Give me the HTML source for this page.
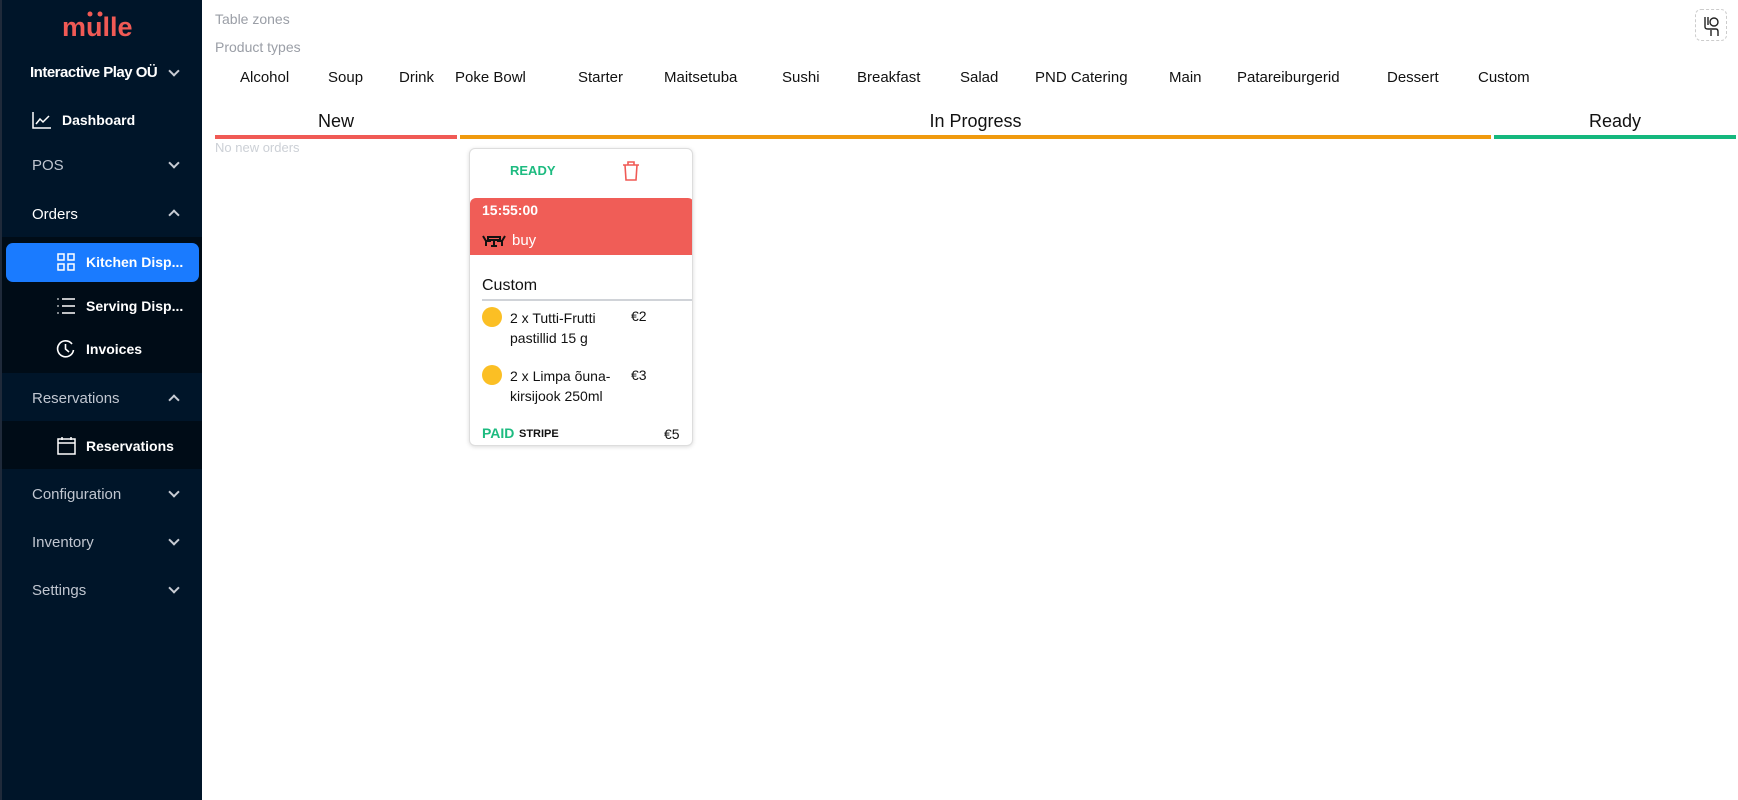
<!DOCTYPE html>
<html><head><meta charset="utf-8"><style>
*{margin:0;padding:0;box-sizing:border-box}
body{width:1738px;height:800px;overflow:hidden;background:#fff;font-family:"Liberation Sans",sans-serif;position:relative}
.sb{position:absolute;left:0;top:0;width:202px;height:800px;background:#001529;border-left:2px solid #1f2a3a;overflow:hidden}
.a{position:absolute;white-space:nowrap}
.sub{position:absolute;left:0;width:200px;background:#000c17}
.mi{position:absolute;left:30px;font-size:15px;color:#c0c6d0}
.mw{color:#fff;font-weight:bold}
.chev{position:absolute;left:168px;width:8px;height:8px;border-right:2px solid #c8ccd4;border-bottom:2px solid #c8ccd4}
.dn{transform:rotate(45deg)}
.up{transform:rotate(-135deg)}
.tab{position:absolute;top:69px;font-size:15px;color:#111}
.ico{position:absolute}
</style></head><body>
<div class="sb">
  <div class="sub" style="top:237px;height:136px"></div>
  <div class="sub" style="top:421px;height:48px"></div>
  <div class="a" style="left:60px;top:12px;font-size:27px;font-weight:bold;color:#f05a55;letter-spacing:0px">m<span style="position:relative">u<svg style="position:absolute;left:1px;top:-2px" width="16" height="10"><circle cx="3" cy="4" r="2.5" fill="#f05a55"/><circle cx="13" cy="4" r="2.5" fill="#f05a55"/></svg></span>lle</div>
  <div class="a mw" style="left:28px;top:64px;font-size:15px;letter-spacing:-0.5px">Interactive Play OÜ</div>
  <div class="chev dn" style="top:67px"></div>
  <svg class="ico" style="left:30px;top:111px" width="20" height="18" fill="none" stroke="#fff" stroke-width="1.5"><path d="M1 1V17H19"/><path d="M4 13L8 8L11 11L17 5"/></svg>
  <div class="a mw" style="left:60px;top:112px;font-size:14px">Dashboard</div>
  <div class="mi a" style="top:157px">POS</div><div class="chev dn" style="top:159px"></div>
  <div class="mi a mw" style="top:206px;font-weight:normal">Orders</div><div class="chev up" style="top:211px"></div>
  <div class="a" style="left:4px;top:243px;width:193px;height:39px;background:#1a7bff;border-radius:7px"></div>
  <svg class="ico" style="left:55px;top:253px" width="18" height="18" fill="none" stroke="#fff" stroke-width="1.5"><rect x="1" y="1" width="6" height="6"/><rect x="11" y="1" width="6" height="6"/><rect x="1" y="11" width="6" height="6"/><rect x="11" y="11" width="6" height="6"/></svg>
  <div class="a mw" style="left:84px;top:254px;font-size:14px">Kitchen Disp...</div>
  <svg class="ico" style="left:54px;top:297px" width="20" height="18" fill="none" stroke="#fff" stroke-width="1.5"><path d="M6 2H19M6 9H19M6 16H19"/><path d="M1 2H3M1 9H3M1 16H3" stroke-width="1"/></svg>
  <div class="a mw" style="left:84px;top:298px;font-size:14px">Serving Disp...</div>
  <svg class="ico" style="left:54px;top:339px" width="19" height="19" fill="none" stroke="#fff" stroke-width="1.6"><path d="M16 5A8 8 0 1 0 17.5 11"/><path d="M9.5 5V10L13 13"/></svg>
  <div class="a mw" style="left:84px;top:341px;font-size:14px">Invoices</div>
  <div class="mi a" style="top:390px">Reservations</div><div class="chev up" style="top:396px"></div>
  <svg class="ico" style="left:55px;top:436px" width="19" height="19" fill="none" stroke="#fff" stroke-width="1.5"><rect x="1" y="3" width="17" height="15"/><path d="M1 7H18M5 1V4M14 1V4"/></svg>
  <div class="a mw" style="left:84px;top:438px;font-size:14px">Reservations</div>
  <div class="mi a" style="top:486px">Configuration</div><div class="chev dn" style="top:488px"></div>
  <div class="mi a" style="top:534px">Inventory</div><div class="chev dn" style="top:536px"></div>
  <div class="mi a" style="top:582px">Settings</div><div class="chev dn" style="top:584px"></div>
</div>

<div class="a" style="left:215px;top:11px;font-size:14px;color:#9a9ea6">Table zones</div>
<div class="a" style="left:215px;top:39px;font-size:14px;color:#9a9ea6">Product types</div>
<div class="a" style="left:1695px;top:9px;width:32px;height:32px;border:1px dashed #ccc;border-radius:6px">
<svg style="position:absolute;left:6px;top:5px" width="20" height="22" fill="none" stroke="#222" stroke-width="1.4"><circle cx="12" cy="7" r="4"/><path d="M3 2V12Q3 14 6 14H14Q16 14 16 17V21M6 2V10M9 15V21"/></svg></div>

<div class="tab" style="left:240px">Alcohol</div>
<div class="tab" style="left:328px">Soup</div>
<div class="tab" style="left:399px">Drink</div>
<div class="tab" style="left:455px">Poke Bowl</div>
<div class="tab" style="left:578px">Starter</div>
<div class="tab" style="left:664px">Maitsetuba</div>
<div class="tab" style="left:782px">Sushi</div>
<div class="tab" style="left:857px">Breakfast</div>
<div class="tab" style="left:960px">Salad</div>
<div class="tab" style="left:1035px">PND Catering</div>
<div class="tab" style="left:1169px">Main</div>
<div class="tab" style="left:1237px">Patareiburgerid</div>
<div class="tab" style="left:1387px">Dessert</div>
<div class="tab" style="left:1478px">Custom</div>

<div class="a" style="left:215px;top:111px;width:242px;text-align:center;font-size:18px;color:#111">New</div>
<div class="a" style="left:460px;top:111px;width:1031px;text-align:center;font-size:18px;color:#111">In Progress</div>
<div class="a" style="left:1494px;top:111px;width:242px;text-align:center;font-size:18px;color:#111">Ready</div>
<div class="a" style="left:215px;top:135px;width:242px;height:4px;background:#f05a55"></div>
<div class="a" style="left:460px;top:135px;width:1031px;height:4px;background:#f09a0e"></div>
<div class="a" style="left:1494px;top:135px;width:242px;height:4px;background:#15b87e"></div>
<div class="a" style="left:215px;top:140px;font-size:13px;color:#ccd0d6">No new orders</div>

<div class="a" style="left:469px;top:148px;width:224px;height:298px;border:1px solid #ddd;border-radius:6px;box-shadow:0 1px 4px rgba(0,0,0,.15);background:#fff;overflow:hidden">
  <div class="a" style="left:40px;top:14px;font-size:13px;font-weight:bold;color:#1dbb80">READY</div>
  <svg class="a" style="left:152px;top:12px" width="18" height="20" fill="none" stroke="#f05a55" stroke-width="1.6"><path d="M1 4H17M6 4V1H12V4M3 4L4 19H14L15 4"/></svg>
  <div class="a" style="left:0;top:49px;width:224px;height:57px;background:#f05d57;border-radius:6px 6px 0 0"></div>
  <div class="a" style="left:12px;top:53px;font-size:14px;font-weight:bold;color:#fff">15:55:00</div>
  <svg class="a" style="left:12px;top:85px" width="24" height="14"><path d="M1 2L4 7V12M23 2L20 7V12M3 7H9M15 7H21M6 3H18V6H6ZM12 6V12M9 12H15" stroke="#111" stroke-width="2" fill="none"/></svg>
  <div class="a" style="left:42px;top:83px;font-size:15px;color:#fff">buy</div>
  <div class="a" style="left:12px;top:128px;font-size:16px;color:#111">Custom</div>
  <div class="a" style="left:12px;top:150px;width:212px;height:2px;background:#d0d3d8"></div>
  <div class="a" style="left:12px;top:158px;width:20px;height:20px;border-radius:50%;background:#fbbf24"></div>
  <div class="a" style="left:40px;top:159px;font-size:14px;line-height:20px;color:#111">2 x Tutti-Frutti<br>pastillid 15 g</div>
  <div class="a" style="left:161px;top:159px;font-size:14px;color:#111">€2</div>
  <div class="a" style="left:12px;top:216px;width:20px;height:20px;border-radius:50%;background:#fbbf24"></div>
  <div class="a" style="left:40px;top:217px;font-size:14px;line-height:20px;color:#111">2 x Limpa õuna-<br>kirsijook 250ml</div>
  <div class="a" style="left:161px;top:218px;font-size:14px;color:#111">€3</div>
  <div class="a" style="left:12px;top:276px;font-size:14px;font-weight:bold;color:#1dbb80">PAID</div>
  <div class="a" style="left:49px;top:279px;font-size:11px;font-weight:bold;color:#111">STRIPE</div>
  <div class="a" style="left:194px;top:277px;font-size:14px;color:#111">€5</div>
</div>
</body></html>
